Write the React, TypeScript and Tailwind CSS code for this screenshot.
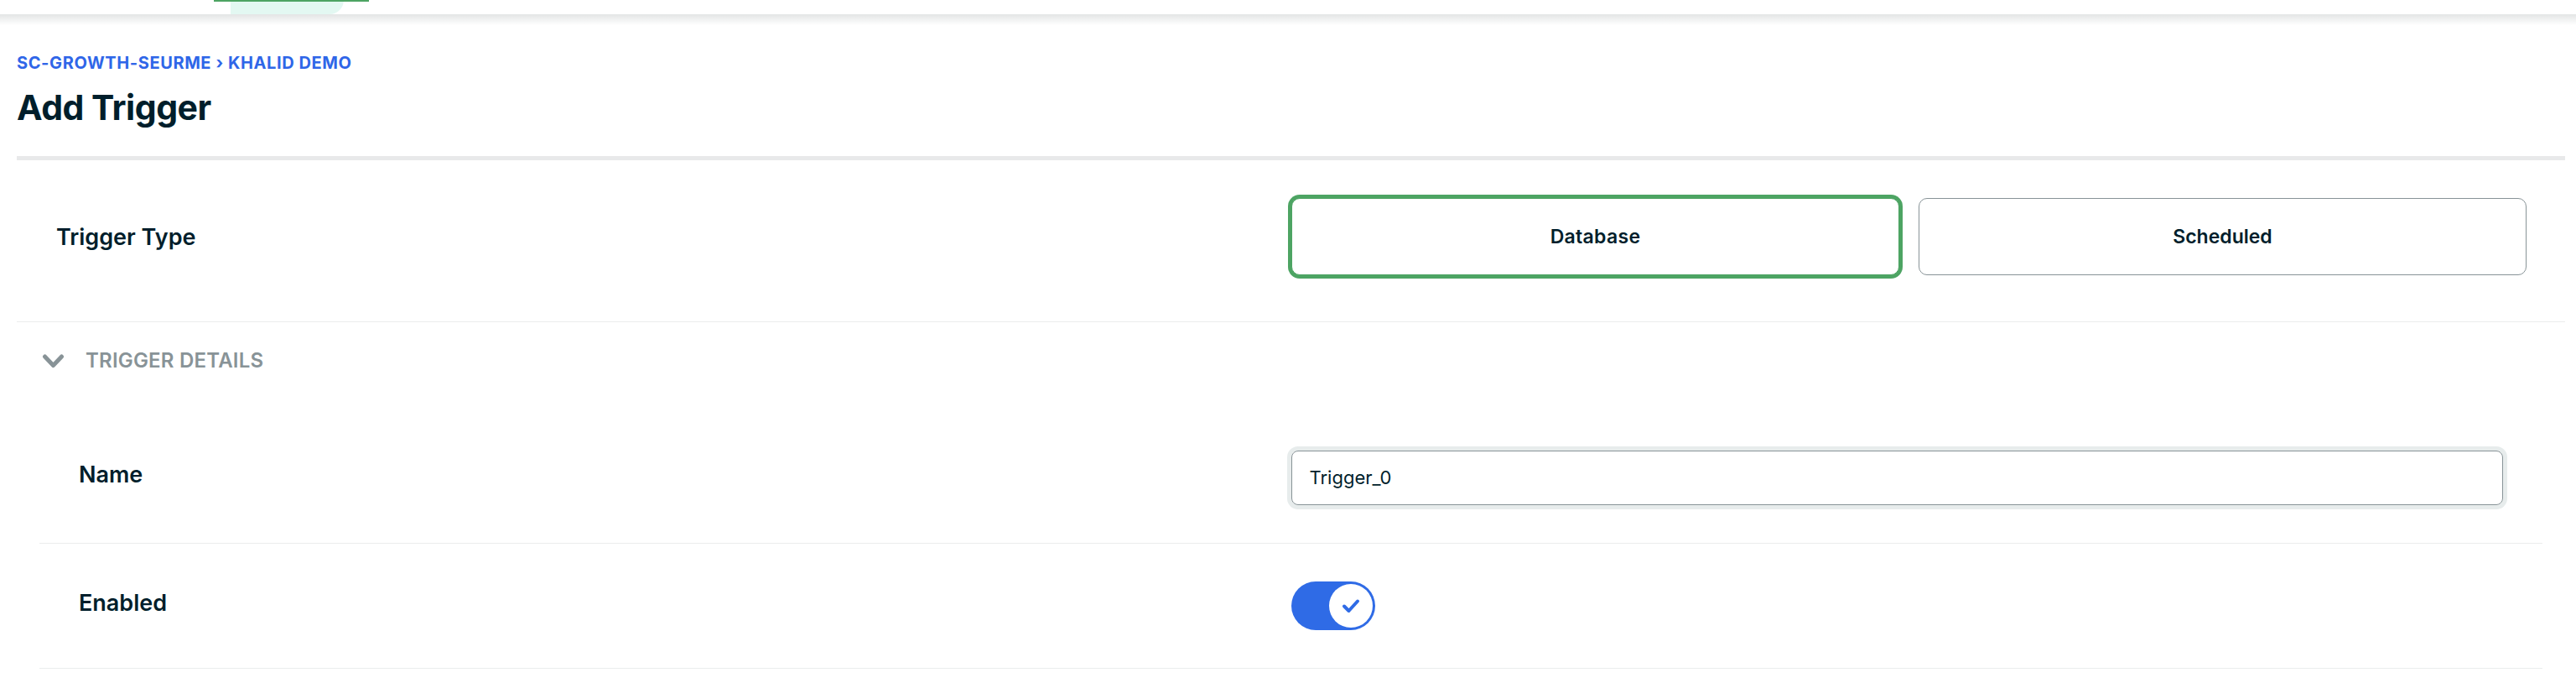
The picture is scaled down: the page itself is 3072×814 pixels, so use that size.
import React from "react"

function Chevron() {
  return (
    <svg width="27" height="19" viewBox="0 0 27 19" fill="none">
      <polyline
        points="3.5,4 13.5,14.5 23.5,4"
        stroke="#889397"
        strokeWidth="5"
        strokeLinecap="round"
        strokeLinejoin="round"
      />
    </svg>
  )
}

function Toggle() {
  return (
    <div className="w-[100px] h-[58px] rounded-full bg-[#2f6be6] flex items-center justify-end pr-[3px]">
      <div className="w-[52px] h-[52px] rounded-full bg-white flex items-center justify-center">
        <svg width="22" height="18" viewBox="0 0 22 18" fill="none">
          <polyline
            points="3,9.5 8.5,15 19,3.5"
            stroke="#2f6be6"
            strokeWidth="4"
            strokeLinecap="round"
            strokeLinejoin="round"
          />
        </svg>
      </div>
    </div>
  )
}

export default function App() {
  return (
    <div className="w-[3072px] min-h-[814px] bg-white font-['Inter',sans-serif] text-[#001e2b]">
      {/* top nav strip */}
      <div className="relative h-[17px] bg-white">
        <div className="absolute left-[275px] top-0 w-[135px] h-[17px] bg-[#e3f8f2] rounded-br-[34px]" />
        <div className="absolute left-[255px] top-0 w-[185px] h-[2px] bg-[#4da463]" />
      </div>
      <div className="h-[13px] bg-gradient-to-b from-[#e3e5e5] to-white" />

      <div className="pl-[20px] pr-[13px]">
        {/* Title block */}
        <div className="mt-[35px] text-[20px] leading-none font-bold text-[#2f66e8] tracking-[0.6px]">
          SC-GROWTH-SEURME › KHALID DEMO
        </div>
        <h1 className="mt-[23px] text-[41px] leading-none font-bold tracking-[-0.5px]">Add Trigger</h1>
        <div className="mt-[37px] h-[5px] bg-[#e8e9ea]" />

        {/* Trigger type */}
        <div className="grid grid-cols-2 items-center pl-[47px] pr-[46px] pt-[45px] pb-[55px] border-b border-[#ebeded]">
          <div className="text-[27px] leading-none font-semibold">Trigger Type</div>
          <div className="flex gap-[23px]">
            <button className="flex-1 h-[92px] rounded-[10px] border border-[#4da463] shadow-[0_0_0_4px_#4da463] bg-white text-[23px] font-semibold tracking-[0.3px]">
              Database
            </button>
            <button className="flex-1 h-[92px] rounded-[10px] border border-[#889397] bg-white text-[23px] font-semibold">
              Scheduled
            </button>
          </div>
        </div>

        {/* Trigger details */}
        <div className="flex items-center h-[30px] mt-[31px] mb-[47px] pl-[30px]">
          <Chevron />
          <span className="ml-[25px] text-[24px] leading-none font-semibold text-[#889397] tracking-[0.2px]">
            TRIGGER DETAILS
          </span>
        </div>

        <div className="mx-[27px]">
          <div className="grid grid-cols-2 items-center px-[47px] py-[45px] border-b border-[#ebeded]">
            <div className="mb-[8px] text-[27px] leading-none font-semibold">Name</div>
            <div className="h-[65px] rounded-[8px] border border-[#889397] shadow-[0_0_0_5px_#e7ecec] flex items-center pl-[21px] text-[22px]">
              Trigger_0
            </div>
          </div>
          <div className="grid grid-cols-2 items-center px-[47px] py-[45px] border-b border-[#ebeded]">
            <div className="mb-[8px] text-[27px] leading-none font-semibold">Enabled</div>
            <Toggle />
          </div>
        </div>
      </div>
    </div>
  )
}
